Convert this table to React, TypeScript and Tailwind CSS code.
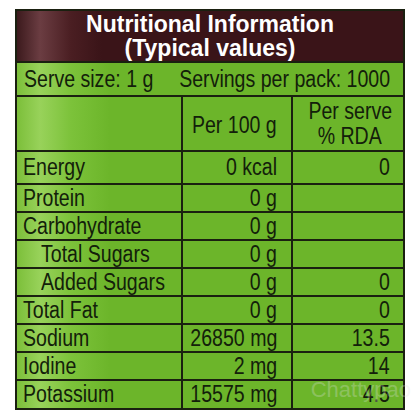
import React from "react";

interface Row {
  label: string;
  per100: string;
  rda: string;
  indent?: boolean;
  h: string;
}

const rows: Row[] = [
  { label: "Energy", per100: "0 kcal", rda: "0", h: "h-[33px]" },
  { label: "Protein", per100: "0 g", rda: "", h: "h-[28px]" },
  { label: "Carbohydrate", per100: "0 g", rda: "", h: "h-[28px]" },
  { label: "Total Sugars", per100: "0 g", rda: "", indent: true, h: "h-[28px]" },
  { label: "Added Sugars", per100: "0 g", rda: "0", indent: true, h: "h-[28px]" },
  { label: "Total Fat", per100: "0 g", rda: "0", h: "h-[28px]" },
  { label: "Sodium", per100: "26850 mg", rda: "13.5", h: "h-[28px]" },
  { label: "Iodine", per100: "2 mg", rda: "14", h: "h-[28px]" },
  { label: "Potassium", per100: "15575 mg", rda: "4.5", h: "h-[27px]" },
];

const font = { fontFamily: '"Liberation Sans", Arial, sans-serif' };

// condensed look: the label font is a narrow Helvetica
const Txt = ({ children, origin }: { children: React.ReactNode; origin: string }) => (
  <span className={"inline-block whitespace-nowrap scale-x-[0.85] " + origin}>{children}</span>
);

const App = () => {
  return (
    <div className="w-[420px] h-[420px] bg-white pt-[9px] pl-[15px]" style={font}>
      <div className="relative w-[390px] border-2 border-[#1a2010] text-[#13200a]">
        {/* title band */}
        <div className="h-[52px] bg-[linear-gradient(90deg,#3c1a1d_0%,#6b3d42_6%,#4a1e22_14%,#3a1418_22%,#3a1418_100%)] flex flex-col items-center justify-center border-b-2 border-[#1a2010] pb-[1px]">
          <div className="text-white font-bold text-[23px] leading-[24px]">Nutritional Information</div>
          <div className="text-white font-bold text-[23px] leading-[24px]">(Typical values)</div>
        </div>

        <div className="bg-[linear-gradient(90deg,#7cbf3a_0%,#98d25a_6%,#7cc23a_14%,#6cb52a_24%,#6cb52a_100%)]">
          {/* serve size */}
          <div className="h-[34px] grid grid-cols-2 items-center pl-[7px] pr-[13px] text-[23px] leading-none border-b-2 border-[#1a2010]">
            <div className="min-w-0 flex justify-start">
              <Txt origin="origin-left">Serve size: 1 g</Txt>
            </div>
            <div className="min-w-0 flex justify-end">
              <Txt origin="origin-right">Servings per pack: 1000</Txt>
            </div>
          </div>

          {/* column heads */}
          <div className="grid grid-cols-[164px_2px_108px_2px_110px] h-[55px] border-b-2 border-[#1a2010] text-[23px]">
            <div />
            <div className="bg-[#1a2010]" />
            <div className="flex items-center justify-end pr-[14px] pt-[3px] leading-none">
              <Txt origin="origin-right">Per 100 g</Txt>
            </div>
            <div className="bg-[#1a2010]" />
            <div className="flex flex-col items-center justify-center leading-[25px] pl-[4px]">
              <Txt origin="origin-center">Per serve</Txt>
              <Txt origin="origin-center">% RDA</Txt>
            </div>
          </div>

          {rows.map((r, i) => (
            <div
              key={r.label}
              className={
                "grid grid-cols-[164px_2px_108px_2px_110px] text-[23px] leading-none " +
                r.h +
                (i < rows.length - 1 ? " border-b-2 border-[#1a2010]" : "")
              }
            >
              <div className={"flex items-center " + (r.indent ? "pl-[24px]" : "pl-[6px]")}>
                <Txt origin="origin-left">{r.label}</Txt>
              </div>
              <div className="bg-[#1a2010]" />
              <div className="flex items-center justify-end pr-[14px]">
                <Txt origin="origin-right">{r.per100}</Txt>
              </div>
              <div className="bg-[#1a2010]" />
              <div className="flex items-center justify-end pr-[13px]">
                <Txt origin="origin-right">{r.rda}</Txt>
              </div>
            </div>
          ))}
        </div>

        <span className="absolute right-[-8px] bottom-[7px] text-[22px] leading-none text-[rgba(225,225,225,0.3)] pointer-events-none">
          Chattypao
        </span>
      </div>
    </div>
  );
};

export default App;
